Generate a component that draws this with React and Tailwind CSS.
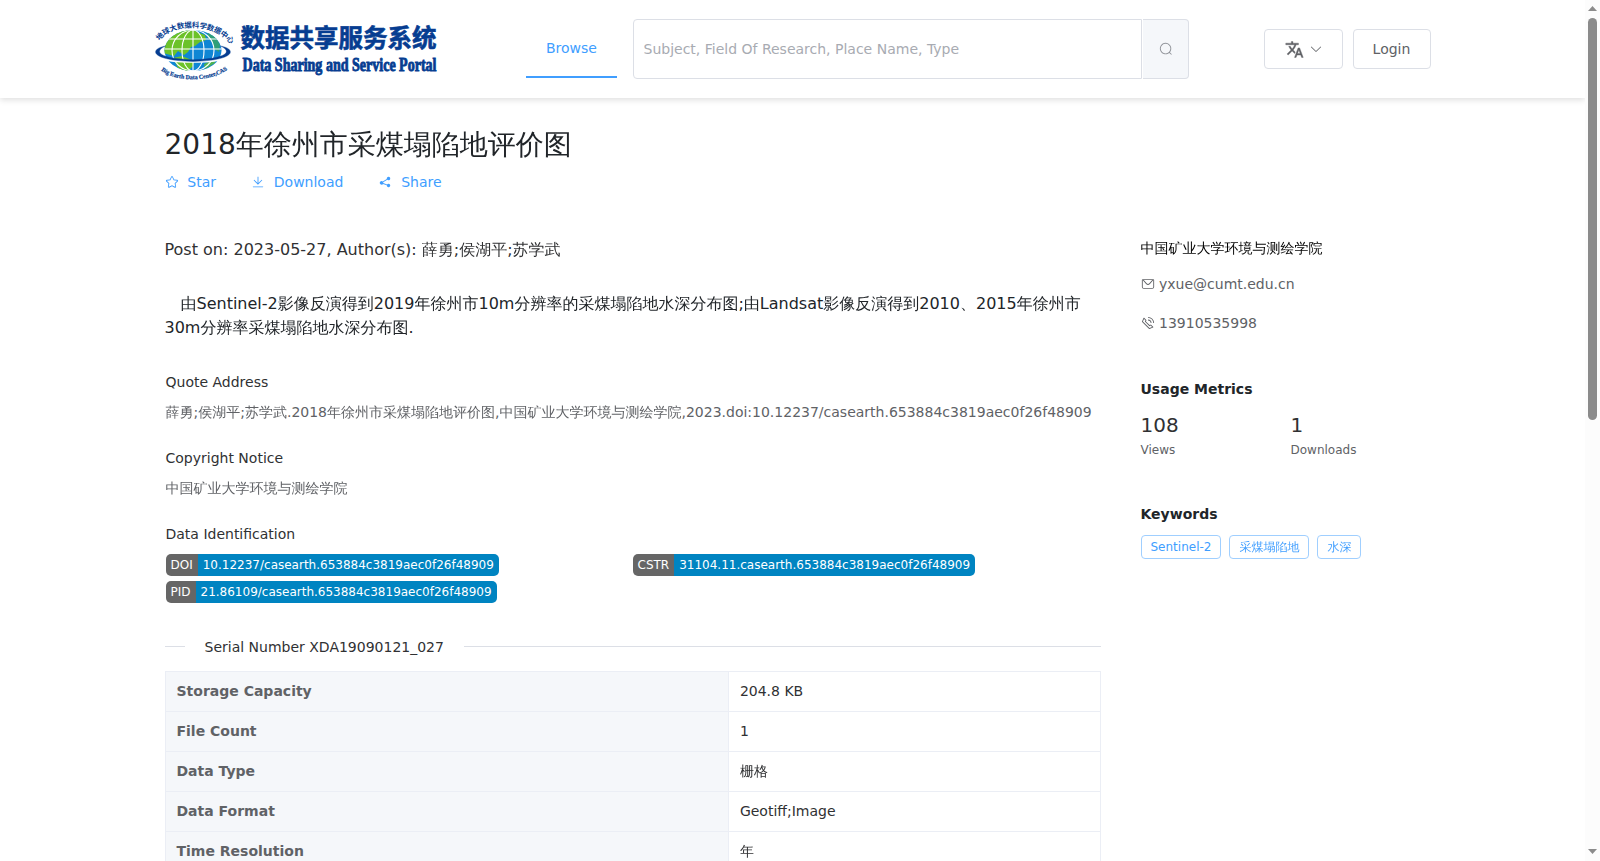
const icons = {
  search: [
    "m795.904 750.72 124.992 124.928a32 32 0 0 1-45.248 45.248L750.656 795.904a416 416 0 1 1 45.248-45.248zM480 832a352 352 0 1 0 0-704 352 352 0 0 0 0 704z",
  ],
  arrowDown: [
    "M831.872 340.864 512 652.672 192.128 340.864a30.592 30.592 0 0 0-42.752 0 29.12 29.12 0 0 0 0 41.6L489.664 714.24a32 32 0 0 0 44.672 0l340.288-331.712a29.12 29.12 0 0 0 0-41.728 30.592 30.592 0 0 0-42.752 0z",
  ],
  star: [
    "m512 747.84 228.16 119.936a6.4 6.4 0 0 0 9.28-6.72l-43.52-254.08 184.512-179.904a6.4 6.4 0 0 0-3.52-10.88l-255.104-37.12L517.76 147.904a6.4 6.4 0 0 0-11.52 0L392.192 379.072l-255.104 37.12a6.4 6.4 0 0 0-3.52 10.88L318.08 606.976l-43.584 254.08a6.4 6.4 0 0 0 9.28 6.72L512 747.84zM313.6 924.48a70.4 70.4 0 0 1-102.144-74.24l37.888-220.928L88.96 472.96A70.4 70.4 0 0 1 128 352.896l221.76-32.256 99.2-200.96a70.4 70.4 0 0 1 126.208 0l99.2 200.96 221.824 32.256a70.4 70.4 0 0 1 39.04 120.064L774.72 629.376l37.888 220.928a70.4 70.4 0 0 1-102.144 74.24L512 820.096l-198.4 104.32z",
  ],
  download: [
    "M160 832h704a32 32 0 1 1 0 64H160a32 32 0 1 1 0-64zm384-253.696 236.288-236.352 45.248 45.248L508.8 704 192 387.2l45.248-45.248L480 584.704V128h64v450.304z",
  ],
  share: [
    "m679.872 348.8-301.76 188.608a127.808 127.808 0 0 1 5.12 52.16l279.936 104.96a128 128 0 1 1-22.464 59.904l-279.872-104.96a128 128 0 1 1-16.64-166.272l301.696-188.608a128 128 0 1 1 33.92 54.272z",
  ],
  message: [
    "M128 224v512a64 64 0 0 0 64 64h640a64 64 0 0 0 64-64V224H128zm0-64h768a64 64 0 0 1 64 64v512a128 128 0 0 1-128 128H192A128 128 0 0 1 64 736V224a64 64 0 0 1 64-64z",
    "M904 224 656.512 506.88a192 192 0 0 1-289.024 0L120 224h784zm-698.944 0 210.56 240.704a128 128 0 0 0 192.704 0L818.944 224H205.056z",
  ],
  phone: [
    "M79.36 432.256 591.744 944.64a32 32 0 0 0 35.2 6.784l253.44-108.544a32 32 0 0 0 9.984-52.032l-153.856-153.92a32 32 0 0 0-36.928-6.016l-69.888 34.944L358.08 394.24l35.008-69.888a32 32 0 0 0-5.952-36.928L233.152 133.568a32 32 0 0 0-52.032 10.048L72.512 397.056a32 32 0 0 0 6.784 35.2zm60.48-29.952 81.536-190.08L325.568 316.48l-24.64 49.216-20.608 41.216 32.576 32.64 271.552 271.552 32.64 32.64 41.216-20.672 49.28-24.576 104.192 104.128-190.08 81.472L139.84 402.304zM512 320v-64a256 256 0 0 1 256 256h-64a192 192 0 0 0-192-192zm0-192V64a448 448 0 0 1 448 448h-64a384 384 0 0 0-384-384z",
  ],
};

const rows = [
  ["Storage Capacity", "204.8 KB"],
  ["File Count", "1"],
  ["Data Type", "栅格"],
  ["Data Format", "Geotiff;Image"],
  ["Time Resolution", "年"],
];

const ids = [
  ["DOI", "10.12237/casearth.653884c3819aec0f26f48909"],
  ["CSTR", "31104.11.casearth.653884c3819aec0f26f48909"],
  ["PID", "21.86109/casearth.653884c3819aec0f26f48909"],
];

const keywords = ["Sentinel-2", "采煤塌陷地", "水深"];

function Icon({ name, className = "size-3.5" }) {
  return (
    <svg viewBox="0 0 1024 1024" fill="currentColor" className={`shrink-0 ${className}`}>
      {icons[name].map((d) => (
        <path key={d} d={d} />
      ))}
    </svg>
  );
}

function TranslateIcon() {
  return (
    <svg viewBox="0 0 24 24" fill="currentColor" stroke="currentColor" strokeWidth="0.5" className="size-[19px] shrink-0">
      <path d="M12.87 15.07 10.33 12.56 10.36 12.53C12.1 10.59 13.34 8.36 14.07 6H17V4H10V2H8V4H1V6H12.17C11.5 7.92 10.44 9.75 9 11.35 8.07 10.32 7.3 9.19 6.69 8H4.69C5.42 9.63 6.42 11.17 7.67 12.56L2.58 17.58 4 19 9 14 12.11 17.11 12.87 15.07M18.5 10H16.5L12 22H14L15.12 19H19.87L21 22H23L18.5 10M15.88 17 17.5 12.67 19.12 17H15.88Z" />
    </svg>
  );
}

function Logo() {
  return (
    <svg viewBox="0 0 290 70" className="h-[70px] w-[290px] shrink-0 overflow-visible">
      <defs>
        <clipPath id="globe">
          <ellipse cx="39" cy="35.5" rx="28.5" ry="20.5" />
        </clipPath>
        <path id="arcTop" d="M5.5 26 C17 8 60 7.5 76 28.5" />
        <path id="arcBottom" d="M7 55.5 C22 67.5 57 67.5 74 54" />
      </defs>

      {/* globe */}
      <g clipPath="url(#globe)">
        <rect x="8" y="14" width="64" height="44" fill="#0f86d4" />
        <path d="M11 17 L39 14 L43 17 L51 20 L52 25 L46 27 L41 31 L37 32 L34 37 L30 40 L24 36 L20 41 L9 38 Z" fill="#6cc229" />
        <path d="M19 43 L28 41 L40 46 L39 51 L33 57 L24 53 Z" fill="#6cc229" />
        <path d="M54 17 L62 22 L66 30 L65 37 L60 34 L58 27 L53 22 Z" fill="#2f9f78" />
        <path d="M50 49 L61 44 L61 48 L51 54 Z" fill="#4fb252" />
        <g fill="none" stroke="#fff" strokeWidth="1.1">
          <path d="M39 14 V57 M14 24 H65 M9 34 H70" />
          <ellipse cx="39" cy="35.5" rx="11" ry="20.5" />
          <ellipse cx="39" cy="35.5" rx="21" ry="20.5" />
        </g>
      </g>
      {/* orbit */}
      <path d="M5 42 C17 48 61 48 73 42" fill="none" stroke="#fff" strokeWidth="2.6" />
      <path
        d="M11.5 31 C-5 34 -4 45.5 39 46.4 C82 45.5 83 34 66.5 31 C78.5 36.5 73.5 43.6 39 44.8 C4.5 43.6 -0.5 36.5 11.5 31 Z"
        fill="#063d91"
        stroke="#063d91"
        strokeWidth="0.4"
      />

      <g fill="#063d91">
        <text textLength="80" className="font-['Noto_Sans_CJK_SC',sans-serif] text-[7.4px] font-bold">
          <textPath href="#arcTop">地球大数据科学数据中心</textPath>
        </text>
        <text
          textLength="70"
          stroke="#063d91"
          strokeWidth="0.2"
          className="font-['Liberation_Serif',serif] text-[6px] font-bold"
        >
          <textPath href="#arcBottom">Big Earth Data Center,CAS</textPath>
        </text>
        <text
          x="86.5"
          y="32"
          textLength="196"
          stroke="#063d91"
          strokeWidth="0.6"
          className="font-['Noto_Sans_CJK_SC',sans-serif] text-[24.5px] font-bold"
        >
          数据共享服务系统
        </text>
        <text
          x="88.5"
          y="55.5"
          textLength="194"
          lengthAdjust="spacingAndGlyphs"
          stroke="#063d91"
          strokeWidth="0.9"
          className="font-['Liberation_Serif',serif] text-[18px] font-bold"
        >
          Data Sharing and Service Portal
        </text>
      </g>
    </svg>
  );
}

function Header() {
  return (
    <header className="flex h-[98px] shrink-0 items-start bg-white pl-[154px] shadow-[0_2px_6px_rgba(0,0,0,0.13)]">
      <div className="pt-[15px]">
        <Logo />
      </div>
      <nav className="ml-[82px] mt-[19px] flex h-[59px] w-[91px] justify-center border-b-2 border-[#409eff] text-sm leading-[58px] text-[#409eff]">
        Browse
      </nav>
      <div className="ml-4 mt-[19px] flex h-[60px] w-[556px]">
        <input
          placeholder="Subject, Field Of Research, Place Name, Type"
          className="w-[509px] rounded-l border border-[#dcdfe6] px-[9.5px] text-sm outline-none placeholder:text-[#a8abb2]"
        />
        <button className="ml-px flex flex-1 items-center justify-center rounded-r border border-l-0 border-[#dcdfe6] bg-[#f5f7fa] text-[#909399]">
          <Icon name="search" />
        </button>
      </div>
      <div className="ml-[75px] mt-[29px] flex h-10 gap-2.5 text-sm text-[#606266]">
        <button className="flex w-[79px] items-center justify-center gap-[5px] rounded border border-[#dcdfe6]">
          <TranslateIcon />
          <Icon name="arrowDown" />
        </button>
        <button className="w-[78px] rounded border border-[#dcdfe6] pr-px">Login</button>
      </div>
    </header>
  );
}

function Action({ icon, label }) {
  return (
    <a className="flex items-center gap-[8.8px]">
      <Icon name={icon} />
      {label}
    </a>
  );
}

function IdBadge({ label, value }) {
  return (
    <div className="flex h-[22px] text-xs leading-[22px] text-white">
      <span className="rounded-l-[5px] bg-[#666] px-[5px]">{label}</span>
      <span className="rounded-r-[5px] bg-[#0084c1] px-[5px]">{value}</span>
    </div>
  );
}

function Main() {
  return (
    <main className="w-[936px] text-sm leading-5 text-[#303133]">
      <h1 className="h-[34px] text-[28px] leading-9 text-[#212529]">2018年徐州市采煤塌陷地评价图</h1>
      <div className="mt-[11px] flex h-5 gap-[35px] text-[#409eff]">
        <Action icon="star" label="Star" />
        <Action icon="download" label="Download" />
        <Action icon="share" label="Share" />
      </div>
      <p className="mt-[46px] h-6 text-base leading-6">Post on: 2023-05-27, Author(s): 薛勇;侯湖平;苏学武</p>
      <p className="mt-[30px] h-12 indent-4 text-base leading-6 text-[#212529]">
        由Sentinel-2影像反演得到2019年徐州市10m分辨率的采煤塌陷地水深分布图;由Landsat影像反演得到2010、2015年徐州市30m分辨率采煤塌陷地水深分布图.
      </p>

      <section className="pl-px">
        <h2 className="mt-8 h-5">Quote Address</h2>
        <p className="mt-2.5 h-5 whitespace-nowrap text-[#606266]">
          薛勇;侯湖平;苏学武.2018年徐州市采煤塌陷地评价图,中国矿业大学环境与测绘学院,2023.doi:10.12237/casearth.653884c3819aec0f26f48909
        </p>
        <h2 className="mt-[26px] h-5">Copyright Notice</h2>
        <p className="mt-2.5 h-5 text-[#606266]">中国矿业大学环境与测绘学院</p>
        <h2 className="mt-[26px] h-5">Data Identification</h2>
        <div className="mt-2.5 grid grid-cols-[467px_1fr] gap-y-[5px]">
          {ids.map(([label, value]) => (
            <IdBadge key={label} label={label} value={value} />
          ))}
        </div>
      </section>

      <div className="mt-[33px] flex h-5 items-center gap-5">
        <span className="h-px w-5 bg-[#dcdfe6]" />
        <span className="pt-0.5">Serial Number XDA19090121_027</span>
        <span className="h-px flex-1 bg-[#dcdfe6]" />
      </div>
      <div className="mt-[15px] border border-b-0 border-[#ebeef5]">
        {rows.map(([label, value]) => (
          <div key={label} className="flex h-10 border-b border-[#ebeef5] leading-[39px]">
            <span className="w-[563px] border-r border-[#ebeef5] bg-[#f5f7fa] pl-[11px] font-bold text-[#606266]">
              {label}
            </span>
            <span className="pl-[11.4px]">{value}</span>
          </div>
        ))}
      </div>
    </main>
  );
}

function Sidebar() {
  return (
    <aside className="w-[300px] pt-[111px] text-sm leading-5 text-[#606266]">
      <p className="h-5 text-black">中国矿业大学环境与测绘学院</p>
      <p className="mt-4 flex h-5 items-center gap-[4.5px]">
        <Icon name="message" />
        yxue@cumt.edu.cn
      </p>
      <p className="mt-[19px] flex h-5 items-center gap-[4.5px]">
        <Icon name="phone" />
        13910535998
      </p>
      <h3 className="mt-[46px] h-5 font-bold text-[#212529]">Usage Metrics</h3>
      <div className="mt-3 flex">
        <div className="w-[150px]">
          <p className="text-xl leading-7 text-[#303133]">108</p>
          <p className="mt-px text-xs leading-5">Views</p>
        </div>
        <div>
          <p className="text-xl leading-7 text-[#303133]">1</p>
          <p className="mt-px text-xs leading-5">Downloads</p>
        </div>
      </div>
      <h3 className="mt-[44px] h-5 font-bold text-[#212529]">Keywords</h3>
      <div className="mt-[11px] flex gap-2">
        {keywords.map((k) => (
          <span key={k} className="h-6 rounded border border-[#a0cfff] px-[9px] text-xs leading-[22px] text-[#409eff]">
            {k}
          </span>
        ))}
      </div>
    </aside>
  );
}

// page scrollbar at the right edge of the window
function ScrollBar() {
  return (
    <div className="flex h-full w-[15px] shrink-0 flex-col items-center bg-[#fcfcfc] text-[#8b8b8b]">
      <svg viewBox="0 0 9 5" className="mt-1.5 h-[5px] w-[9px]" fill="currentColor">
        <path d="M4.5 0 9 5H0Z" />
      </svg>
      <div className="mt-[7px] h-[402px] w-[9px] rounded-full bg-[#8b8b8b]" />
      <svg viewBox="0 0 9 5" className="mb-[7px] mt-auto h-[5px] w-[9px]" fill="currentColor">
        <path d="M0 0H9L4.5 5Z" />
      </svg>
    </div>
  );
}

function App() {
  return (
    <div className="flex h-[861px] w-[1600px] overflow-hidden bg-white font-['DejaVu_Sans','WenQuanYi_Zen_Hei','Droid_Sans_Fallback','Noto_Sans_CJK_SC',sans-serif]">
      <div className="flex h-full w-[1585px] flex-col overflow-hidden">
        <Header />
        <div className="flex gap-10 pl-[164.5px] pt-[29px]">
          <Main />
          <Sidebar />
        </div>
      </div>
      <ScrollBar />
    </div>
  );
}

export default App;
